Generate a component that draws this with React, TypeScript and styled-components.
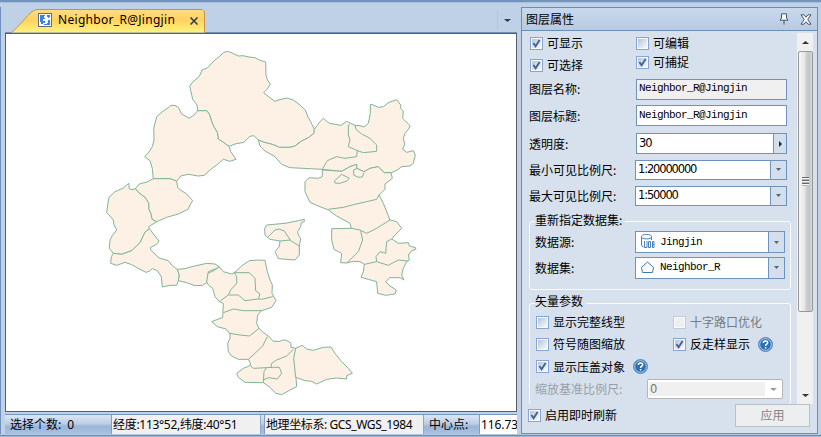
import React from 'react';
import styled, { createGlobalStyle, css } from 'styled-components';

const cjk = '"Noto Sans CJK SC", sans-serif';

const Global = createGlobalStyle`
  body { margin: 0; overflow: hidden; }
  * { box-sizing: border-box; }
`;

const Window = styled.div`
  width: 821px; height: 437px; overflow: hidden;
  display: flex; flex-direction: column;
  background: #bfd1e6;
  color: #000;
  font: 12px/16px ${cjk};
  white-space: nowrap;
`;
const TopEdge = styled.div`
  height: 3px; flex: none;
  background: linear-gradient(#7294bd 0 1px, #7294bd 1px 2px, #a9c0dc 2px);
`;
const Body = styled.div`flex: 1; min-height: 0; display: flex;`;
const BottomEdge = styled.div`
  height: 3px; flex: none;
  background: linear-gradient(#b2c7e1 0 1px, #6a8db9 1px 2px, #9db7d8 2px);
`;
const LeftRail = styled.div`
  width: 5px; flex: none; margin-top: 4px;
  border-left: 1px solid #6f90ba;
  background: #bfd1e6;
`;
const Document = styled.div`width: 512px; flex: none; display: flex; flex-direction: column;`;
const TabBar = styled.div`
  height: 30px; flex: none; display: flex; align-items: flex-end;
  border-bottom: 1px solid #7190b5;
`;
const Tab = styled.div`
  position: relative; width: 200px; height: 24px; margin: 0 0 -1px 6px;
  display: flex; align-items: center; padding: 0 0 3px 27px;
`;
const TabShape = styled.svg`position: absolute; left: 0; top: 0;`;
const TabIcon = styled.svg`position: relative; flex: none;`;
const TabTitle = styled.span`
  position: relative; width: 118px; margin-left: 6px;
  font: 12px/18px "Noto Sans", sans-serif; letter-spacing: 0.3px;
`;
const TabClose = styled.svg`position: relative; margin-left: 14px; margin-top: 2px;`;
const TabMenu = styled.div`
  margin-left: auto; height: 18px; width: 20px; margin-bottom: 3px;
  border-left: 1px solid #b2c5dd; display: grid; place-items: center;
`;
const Canvas = styled.div`
  height: 379px; flex: none; background: #fff;
  border: 1px solid #5c5d66;
`;
const MapSvg = styled.svg`
  display: block;
  path { fill: #fdf0e5; stroke: #82b498; stroke-width: 1; vector-effect: non-scaling-stroke; stroke-linejoin: round; }
  path.line { fill: none; }
`;
const StatusBar = styled.div`
  flex: 1; margin-top: 2px; display: flex; align-items: stretch; overflow: hidden;
  background: linear-gradient(#dbe6f3 0, #bccfe7 45%, #9cb6d8 60%, #a9c1e0);
  border-top: 1px solid #7896bd;
  line-height: 17px;
`;
const StatusLabel = styled.div<{ $w: number; $pad: number }>`
  width: ${p => p.$w}px; flex: none; padding-left: ${p => p.$pad}px;
`;
const StatusCell = styled.div<{ $w: number; $gap?: number; $white?: boolean }>`
  width: ${p => p.$w}px; flex: none; margin-right: ${p => p.$gap ?? 0}px;
  overflow: hidden; padding-left: 1px;
  background: ${p => (p.$white ? '#fff' : '#f0f0f0')};
  border-left: 1px solid #7f9dc3; border-right: 1px solid #8fa9cb;
`;
const Latin = styled.span<{ $track?: number }>`
  font-family: "Noto Sans", ${cjk}; letter-spacing: ${p => p.$track ?? 0}px;
`;

const Panel = styled.div`
  width: 297px; height: 427px; flex: none; margin: 4px 0 0 4px;
  border: 1px solid #6c8eb8; background: #d6e1ed;
  display: flex; flex-direction: column;
`;
const PanelTitle = styled.div`
  height: 23px; flex: none; display: flex; align-items: center;
  padding: 0 5px 1px 4px;
  background: linear-gradient(#c9d9ec, #b6cae3);
  border-bottom: 1px solid #6c8eb8;
`;
const TitleIcons = styled.div`margin-left: auto; display: flex; align-items: center; gap: 11px; padding-top: 1px;`;
const Scroller = styled.div`height: 373px; flex: none; display: flex; overflow: hidden;`;
const Form = styled.div`width: 275px; flex: none; padding-left: 7px; display: flex; flex-direction: column;`;
const Choices = styled.div`display: grid; grid-template-columns: 106px 1fr; height: 47px; padding-top: 4px;`;
const ChoiceColumn = styled.div<{ $gap: number }>`display: flex; flex-direction: column; gap: ${p => p.$gap}px;`;

const Check = styled.label<{ $disabled?: boolean }>`
  display: flex; align-items: center; gap: 4px; height: 16px; padding-left: 1px;
  color: ${p => (p.$disabled ? '#777d84' : '#000')};
`;
const Box = styled.svg`flex: none;`;

const Row = styled.div<{ $h: number; $label?: number; $disabled?: boolean }>`
  height: ${p => p.$h}px; flex: none; display: flex; align-items: center;
  & > span:first-child { width: ${p => p.$label ?? 106}px; flex: none; }
  ${p => p.$disabled && css`color: #9a9fa5;`}
`;
const Field = styled.div<{ $w: number; $h: number; $shade?: boolean; $disabled?: boolean }>`
  width: ${p => p.$w}px; height: ${p => p.$h}px; flex: none;
  display: flex; align-items: stretch;
  background: ${p => (p.$shade ? '#f0f0f0' : '#fff')};
  border: 1px solid ${p => (p.$disabled ? '#b5b5b5' : '#6f93bd')};
  border-radius: ${p => (p.$disabled ? 2 : 0)}px;
`;
const Value = styled.div<{ $sans?: boolean; $disabled?: boolean }>`
  flex: 1; display: flex; align-items: center; padding: 0 0 2px 2px;
  font: ${p => (p.$sans ? '11.5px/14px "DejaVu Sans", sans-serif' : '11px/14px "Liberation Mono", monospace')};
  letter-spacing: ${p => (p.$sans ? -1.15 : -0.6)}px;
  ${p => p.$disabled && css`background: #f0f0f0; color: #777; margin: 2px 0 2px 1px; padding-left: 1px; padding-bottom: 1px;`}
`;
const IconValue = styled(Value)`padding-left: 4px; gap: 5px; padding-bottom: 1px;`;
const DropButton = styled.div<{ $w: number; $plain?: boolean }>`
  width: ${p => p.$w}px; flex: none; display: grid; place-items: center;
  ${p => !p.$plain && css`border-left: 1px solid #6f93bd; background: #d3dfed;`}
`;
const Group = styled.fieldset<{ $h: number; $open?: boolean }>`
  margin: 0; height: ${p => p.$h}px; flex: none; width: 262px; min-width: 0;
  padding: 0 0 0 5px;
  border: 1px solid #fafcfe; border-radius: 3px;
  ${p => p.$open && css`border-bottom: 0;`}
`;
const Legend = styled.legend`padding: 0 3px 0 0; height: 16px; line-height: 12px;`;
const Pair = styled.div<{ $h: number }>`
  height: ${p => p.$h}px; display: grid; grid-template-columns: 137px 1fr; align-items: center;
`;
const WithHelp = styled.div`display: flex; align-items: center; gap: 8px;`;
const ScrollBar = styled.div`
  width: 16px; flex: none; margin-top: 2px; display: flex; flex-direction: column; background: #f0f0f0;
`;
const ScrollArrow = styled.div`height: 18px; flex: none; display: grid; place-items: center;`;
const Thumb = styled.div`
  height: 261px; flex: none; display: grid; place-items: center; margin: 0 0.5px;
  border: 1px solid #989898; border-radius: 2px;
  background: linear-gradient(90deg, #f7f7f7, #e6e6e6 45%, #cfd0d2 55%, #c3c4c7 80%, #dadada);
`;
const Grip = styled.div`width: 7px; height: 9px; background: repeating-linear-gradient(#666 0 1px, #f6f6f6 1px 2px, #b5b5b5 2px 3px);`;
const Spacer = styled.div`flex: 1;`;
const Footer = styled.div`flex: 1; display: flex; align-items: flex-start; padding: 0 7px 0 5px;`;
const FooterCheck = styled(Check)`margin-top: 3px;`;
const ApplyButton = styled.div`
  margin-left: auto; width: 75px; height: 23px; display: grid; place-items: center; padding-bottom: 1px;
  border: 1px solid #bcc1c6; background: #eceeef; color: #858585;
`;

function Option({ text, checked, disabled }: { text: string; checked?: boolean; disabled?: boolean }) {
  return (
    <Check $disabled={disabled}>
      <CheckMark checked={checked} disabled={disabled} />
      {text}
    </Check>
  );
}
function CheckMark({ checked, disabled }: { checked?: boolean; disabled?: boolean }) {
  return (
    <Box width="13" height="13" viewBox="0 0 13 13">
      <defs>
        <linearGradient id="box" x1="0" y1="0" x2="1" y2="1">
          <stop offset="0" stopColor="#b4c3d8" /><stop offset="1" stopColor="#fafcff" />
        </linearGradient>
      </defs>
      <rect x=".5" y=".5" width="12" height="12" fill="#f7f9fc" stroke={disabled ? '#c4cbd2' : '#84a6d0'} />
      <rect x="2" y="2" width="9" height="9" fill={disabled ? '#edf0f3' : 'url(#box)'} />
      {checked && <path d="M3.4 6 5.6 9.3 9.6 3" fill="none" stroke="#466394" strokeWidth="1.9" />}
    </Box>
  );
}
function Arrow({ dir = 'down', color = '#5b6370', w = 5 }: { dir?: string; color?: string; w?: number }) {
  const d = dir === 'down' ? `M0 0H${w}L${w / 2} 3Z` : dir === 'up' ? `M0 3H${w}L${w / 2} 0Z` : 'M1 0V6L4 3Z';
  return <svg width={w} height={dir === 'right' ? 6 : 3}><path d={d} fill={color} /></svg>;
}
function Help() {
  return (
    <svg width="15" height="15" viewBox="0 0 15 15">
      <circle cx="7.5" cy="7.5" r="7" fill="#2d6fb5" stroke="#5c8fc6" />
      <circle cx="7.5" cy="7.5" r="5.8" fill="none" stroke="#d4e5f6" strokeWidth=".8" />
      <path d="M5.3 6C5.3 3.2 9.8 3.3 9.7 5.8 9.6 7.3 7.6 7.2 7.6 9M7.6 10.1V11.6" fill="none" stroke="#fff" strokeWidth="1.5" />
    </svg>
  );
}
function Combo({ children, w, h, button = 16 }: { children: React.ReactNode; w: number; h: number; button?: number }) {
  return <Field $w={w} $h={h}>{children}<DropButton $w={button}><Arrow /></DropButton></Field>;
}

function RegionMap() {
  return (
    <MapSvg width="510" height="377" viewBox="6 34 510 377">
      <path d="M197.7 110.7L197 105 192.7 99.3 191 91.7 189.7 86.7 191 84 195 80 199 76.7 200.5 74 202 70 207.7 67.7 211 64 215 60 219 57 223.3 52.7 227.3 51.3 231 52.5 238.3 56 243 55.7 249 57 255 57.7 260 60.3 265.7 62 266 75 267.5 80 270.3 84.3 268 88 263.7 92.7 269 97 274.7 101.3 280 99.5 287.3 98 293.3 100 300 105 305.3 110 308 117 310.7 121.7 314.3 129.3 314 133.3 308.3 137.7 301.7 141 297 144 295 146 290 147.3 279.3 147.3 273.3 144.7 263.3 142 258.3 140 254 135.7 250 136.3 246 140 244 142.3 235 144 229.3 146.3 226.7 145 223 142 218.3 139 217.3 132.3 214 127 212.3 123.3 209.3 114 206.7 110.7Z" />
      <path d="M206.7 110.7L209.3 114 212.3 123.3 214 127 217.3 132.3 218.3 139 223 142 226.7 145 229.3 146.3 230.7 151.7 236 159.3 230 161.3 223.3 159.3 217.3 164.5 210 170 204.3 175.3 198.3 176 188.3 174.3 180.7 176 176.7 181.3 170 178.7 153.3 178.7 152.3 168.3 150 160.7 144.7 156.7 149 152 152.3 146.7 154 140 153.7 128.3 156.7 116.7 162 112 168.3 107.7 171 105.3 175 105.5 178.3 107.3 181.7 114 189.3 118.3 194 115 197.7 110.7Z" />
      <path d="M153.3 178.7L147 182 139.3 184 135.3 188.7 139 193 145 197.3 148.7 203.3 148.7 209 151 214 152 219.3 156.7 221.7 166.7 217.3 178.3 214 188.3 209 190 205 192.7 200.7 186.7 194 182 191 177.7 187.7 176.7 181.3 174 180 170 178.7Z" />
      <path d="M135.3 188.7L132 189.7 129.3 188.7 128.7 183.3 123.3 188 115 191.7 109 197.3 107.7 205 106.7 212.7 110 216 113.3 220 114 225 116.7 230 112 236 110 240 109.3 248.3 113.3 253.3 121.7 254.3 131.7 250.7 136 247 140 242.7 145 232.3 149.3 228.7 148.7 226.7 156.7 221.7 152 219.3 151 214 148.7 209 148.7 203.3 145 197.3 139 193Z" />
      <g transform="translate(90 160) scale(.333333)">
        <path d="M178 206L195 228 207 243 200 253 182 262 182 270 207 294 235 302 245 315 262 328 268 345 265 362 260 376 240 376 217 381 214 350 202 332 187 326 178 334 168 337 150 328 125 314 105 307 80 316 62 310 64 290 70 280 95 283 125 272 150 248 165 217Z" />
        <path d="M262 328L285 326 310 319 350 310 375 312 388 320 380 325 355 335 354 352 350 368 338 376 315 377 290 368 265 362 268 345Z" />
      </g>
      <g transform="translate(190 260) scale(.333333)">
        <path d="M88 20L100 35 125 42 133 38 155 18 178 2 205 0 225 1 232 35 240 60 247 75 246 100 258 122 245 142 230 147 215 152 203 165 200 190 207 205 220 218 235 228 250 244 270 244 278 240 290 241 303 250 303 262 317 265 337 256 350 267 370 271 400 262 423 261 435 280 455 305 475 325 487 340 470 347 470 357 440 354 410 358 380 372 365 364 345 362 318 352 320 380 300 390 275 404 257 400 240 382 220 368 165 367 145 352 140 340 160 325 178 318 182 312 175 298 145 298 125 288 115 275 113 250 120 235 120 222 108 207 82 200 65 185 98 172 100 130 88 125 75 110 68 85 55 75 50 65 54 40 75 30Z" />
        <path className="line" d="M133 38L140 50 140 70 122 90 115 105 88 125M133 38L178 38 195 55 197 92 210 102 205 117M115 105L145 105 165 122 205 117 215 118 248 110M100 158L130 147 160 152 215 152M118 220L150 225 178 228 195 215 207 205M232 230L218 258 195 280 175 298M180 316L190 325 250 322 268 322 275 340 262 357 235 353 220 360M310 268L290 288 260 300 245 310 243 322M317 265L311 295 317 352M220 368L222 335 230 322" />
      </g>
      <g transform="translate(240 40) scale(.333333)">
        <path d="M223 268L232 256 240 245 250 235 268 250 303 256 320 244 345 256 360 257 372 261 385 250 391 220 391 193 400 195 415 202 430 200 447 187 470 179 482 195 482 205 490 213 488 235 500 247 511 258 502 272 495 280 490 295 494 312 488 328 500 337 520 332 526 345 520 370 510 378 485 380 475 388 455 398 432 398 415 380 390 385 372 395 350 385 350 373 330 380 305 394 247 388 150 383 125 373 105 350 75 333 60 318 55 300 70 306 100 314 118 322 150 322 165 318 185 303 205 293 222 280Z" />
        <path className="line" d="M330 254L325 256 325 285 330 300 325 320 350 331 370 338 410 334 410 315 390 295 365 282 348 268 345 256M247 388L262 362 290 350 315 355 350 350 352 331" />
      </g>
      <g transform="translate(250 160) scale(.333333)">
        <path d="M217 30L217 50 205 55 178 53 165 65 165 95 180 127 205 138 235 150 260 168 300 190 304 205 245 206 245 240 252 268 275 280 272 308 290 309 310 304 330 305 343 313 340 335 333 352 355 358 380 365 383 400 407 406 435 402 439 390 420 378 407 365 420 353 450 353 462 360 455 345 460 325 470 305 478 300 475 285 485 272 497 268 497 263 478 258 475 248 445 250 425 237 438 222 455 205 440 185 420 180 408 150 400 130 387 105 405 88 405 72 427 55 423 38 402 38 385 20 360 25 342 35 320 25 320 13 300 20 275 34Z" />
        <path className="line" d="M235 148L280 142 310 134 350 125 380 118 387 105M304 205L330 210 350 220 380 205 420 180M332 213L338 240 325 275 290 309M343 313L380 305 415 316 445 300 473 303M380 305L378 290 390 275 407 280 410 245 425 237M253 63L275 43 298 55 290 63 270 70 255 69ZM320 25L311 30 311 45 325 52 337 51 342 38" />
        <path d="M163 178L163 185 154 188 152 200 143 215 145 225 152 235 148 258 148 285 135 300 85 296 75 275 88 260 90 243 60 238 45 225 44 205 50 195 105 190 145 182Z" />
        <path className="line" d="M55 230L75 210 87 207 103 213 122 242 148 258M90 243L122 240" />
      </g>
    </MapSvg>
  );
}

export default function App() {
  return (
    <Window>
      <Global />
      <TopEdge />
      <Body>
        <LeftRail />
        <Document>
          <TabBar>
            <Tab>
              <TabShape width="194" height="24" viewBox="0 0 194 24">
                <defs>
                  <linearGradient id="tab" x1="0" y1="0" x2="0" y2="1">
                    <stop offset="0" stopColor="#ffdc86" /><stop offset=".45" stopColor="#ffd25f" /><stop offset="1" stopColor="#fff47e" />
                  </linearGradient>
                </defs>
                <path d="M.5 23.5C8 18 15 7 22 2Q24 .5 27 .5H191L193.5 3V23.5" fill="url(#tab)" stroke="#c69442" />
              </TabShape>
              <TabIcon width="14" height="14" viewBox="0 0 14 14">
                <rect x=".5" y=".5" width="13" height="13" fill="#fff" stroke="#5e6c80" />
                <path d="M2 2H7V3H6V5H7V6H5V8H7V10H5V11H3V9H2ZM9 2H12V4H11V5H10V4H9ZM10 7H12V12H6V11H9V10H10Z" fill="#3b7fe8" />
              </TabIcon>
              <TabTitle>Neighbor_R@Jingjin</TabTitle>
              <TabClose width="8" height="8" viewBox="0 0 8 8"><path d="M.5.5 7.5 7.5M7.5.5.5 7.5" stroke="#2b3850" strokeWidth="1.5" /></TabClose>
            </Tab>
            <TabMenu><Arrow w={7} color="#293b56" /></TabMenu>
          </TabBar>
          <Canvas><RegionMap /></Canvas>
          <StatusBar>
            <StatusLabel $w={106} $pad={5}>选择个数:&nbsp;<Latin> 0</Latin></StatusLabel>
            <StatusCell $w={150} $gap={3}><Latin $track={-0.3}>经度:113°52,纬度:40°51</Latin></StatusCell>
            <StatusCell $w={160}><Latin $track={-0.4}>地理坐标系: GCS_WGS_1984</Latin></StatusCell>
            <StatusLabel $w={55} $pad={5}>中心点:</StatusLabel>
            <StatusCell $w={60} $white><Latin $track={-0.1}>116.73</Latin></StatusCell>
          </StatusBar>
        </Document>

        <Panel>
          <PanelTitle>
            图层属性
            <TitleIcons>
              <svg width="10" height="12" viewBox="0 0 10 12"><path d="M2.5.8H7.5V5L9 7.2H1L2.5 5ZM5 7.2V11.5" fill="#fff" stroke="#46536a" /></svg>
              <svg width="12" height="11" viewBox="0 0 12 11"><path d="M1 .8H4L6 3.3 8 .8H11L7.7 5.5 11 10.2H8L6 7.7 4 10.2H1L4.3 5.5Z" fill="#fff" stroke="#46536a" /></svg>
            </TitleIcons>
          </PanelTitle>
          <Scroller>
            <Form>
              <Choices>
                <ChoiceColumn $gap={6}><Option text="可显示" checked /><Option text="可选择" checked /></ChoiceColumn>
                <ChoiceColumn $gap={3}><Option text="可编辑" /><Option text="可捕捉" checked /></ChoiceColumn>
              </Choices>
              <Row $h={22} $label={107}><span>图层名称:</span><Field $w={151} $h={21} $shade><Value>Neighbor_R@Jingjin</Value></Field></Row>
              <Row $h={31} $label={107}><span>图层标题:</span><Field $w={151} $h={21}><Value>Neighbor_R@Jingjin</Value></Field></Row>
              <Row $h={25} $label={107}>
                <span>透明度:</span>
                <Field $w={151} $h={21}><Value $sans>30</Value><DropButton $w={13}><Arrow dir="right" color="#18253a" /></DropButton></Field>
              </Row>
              <Row $h={27}><span>最小可见比例尺:</span><Combo w={152} h={20}><Value $sans>1:20000000</Value></Combo></Row>
              <Row $h={25}><span>最大可见比例尺:</span><Combo w={152} h={20}><Value $sans>1:50000</Value></Combo></Row>
              <Spacer />
              <Group $h={76}>
                <Legend>重新指定数据集:</Legend>
                <Row $h={25} $label={100}>
                  <span>数据源:</span>
                  <Combo w={150} h={22}>
                    <IconValue>
                      <svg width="15" height="15" viewBox="0 0 15 15" fill="none" stroke="#4782bd">
                        <ellipse cx="6.5" cy="2.7" rx="5" ry="2.2" /><path d="M1.5 3V11Q2 13 3.5 13M11.5 3V6M4.5 7V13.5H7V7M8.5 7.5H10.5V13.5H8.5ZM12.5 7.5H14V13.5H12.5ZM12.5 10.5H14" />
                      </svg>
                      Jingjin
                    </IconValue>
                  </Combo>
                </Row>
                <Row $h={26} $label={100}>
                  <span>数据集:</span>
                  <Combo w={150} h={22}>
                    <IconValue>
                      <svg width="15" height="13" viewBox="0 0 15 13" fill="none" stroke="#3d78b5"><path d="M1.5 6.5 7.5 1 13.5 6.5 12.5 11.5H2.5Z" /></svg>
                      Neighbor_R
                    </IconValue>
                  </Combo>
                </Row>
              </Group>
              <Spacer />
              <Group $h={109} $open>
                <Legend>矢量参数</Legend>
                <Pair $h={22}><Option text="显示完整线型" /><Option text="十字路口优化" disabled /></Pair>
                <Pair $h={22}><Option text="符号随图缩放" /><WithHelp><Option text="反走样显示" checked /><Help /></WithHelp></Pair>
                <Pair $h={23}><WithHelp><Option text="显示压盖对象" checked /><Help /></WithHelp></Pair>
                <Row $h={22} $label={112} $disabled>
                  <span>缩放基准比例尺:</span>
                  <Field $w={136} $h={20} $disabled><Value $sans $disabled>0</Value><DropButton $w={17} $plain><Arrow w={7} color="#999" /></DropButton></Field>
                </Row>
              </Group>
            </Form>
            <ScrollBar>
              <ScrollArrow><Arrow dir="up" w={7} color="#333" /></ScrollArrow>
              <Thumb><Grip /></Thumb>
              <Spacer />
              <ScrollArrow><Arrow w={7} color="#333" /></ScrollArrow>
            </ScrollBar>
          </Scroller>
          <Footer>
            <FooterCheck><CheckMark checked />启用即时刷新</FooterCheck>
            <ApplyButton>应用</ApplyButton>
          </Footer>
        </Panel>
      </Body>
      <BottomEdge />
    </Window>
  );
}
